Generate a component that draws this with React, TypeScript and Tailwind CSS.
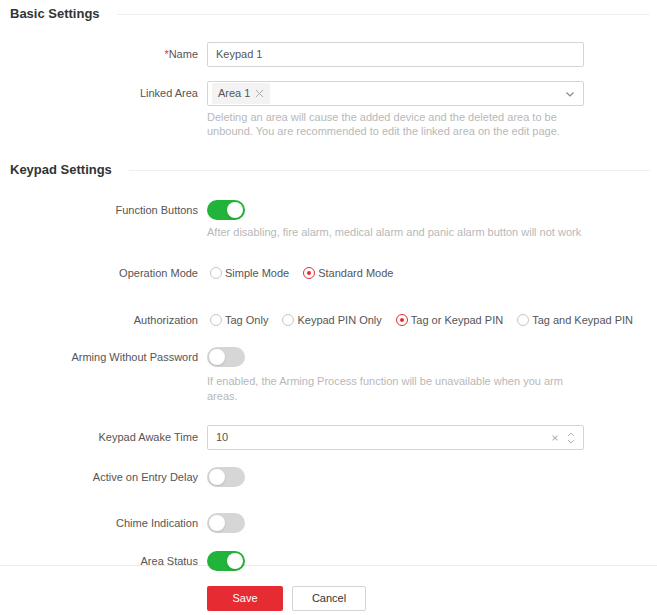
import type { ReactNode } from 'react'

function SectionTitle({ title }: { title: string }) {
  return (
    <div className="flex h-[28px] items-center gap-[17px] pl-[10px] pr-[7px]">
      <h3 className="text-[13px] font-bold text-[#333]">{title}</h3>
      <div className="h-px flex-1 bg-[#efefef]" />
    </div>
  )
}

function Row({ label, required, children, className = '' }: { label: string; required?: boolean; children: ReactNode; className?: string }) {
  return (
    <div className={`flex items-center ${className}`}>
      <label className="w-[198px] shrink-0 text-right text-[11px] text-[#555]">
        {required && <span className="text-[#e52d35]">*</span>}
        {label}
      </label>
      <div className="ml-[9px] flex flex-1 items-center">{children}</div>
    </div>
  )
}

function Toggle({ on }: { on?: boolean }) {
  return (
    <div className={`flex h-[20px] w-[38px] items-center rounded-full p-[2px] ${on ? 'justify-end bg-[#22b43a]' : 'justify-start bg-[#d6d6d6]'}`}>
      <div className="h-[16px] w-[16px] rounded-full bg-white shadow-sm" />
    </div>
  )
}

function Radio({ label, checked }: { label: string; checked?: boolean }) {
  return (
    <div className="mr-[14px] flex items-center">
      <span className={`flex h-[12px] w-[12px] items-center justify-center rounded-full border bg-white ${checked ? 'border-[#e52d35]' : 'border-[#c8c8c8]'}`}>
        {checked && <span className="h-[4px] w-[4px] rounded-full bg-[#e52d35]" />}
      </span>
      <span className="ml-[3px] text-[11px] text-[#555]">{label}</span>
    </div>
  )
}

function Help({ children, className = '' }: { children: ReactNode; className?: string }) {
  return <p className={`ml-[207px] text-[11px] leading-[14px] text-[#b8b8b8] ${className}`}>{children}</p>
}

export default function App() {
  return (
    <div className="h-[615px] w-[657px] overflow-hidden bg-white font-['Liberation_Sans',Arial,sans-serif]">
      <SectionTitle title="Basic Settings" />

      <Row label="Name" required className="mt-[14px]">
        <div className="flex h-[25px] w-[377px] items-center rounded-[2px] border border-[#d4d4d4] px-[8px] text-[11px] text-[#555]">
          Keypad 1
        </div>
      </Row>

      <Row label="Linked Area" className="mt-[14px]">
        <div className="flex h-[25px] w-[377px] items-center justify-between rounded-[2px] border border-[#d4d4d4] pl-[4px] pr-[8px]">
          <span className="flex items-center gap-[5px] rounded-[2px] bg-[#f3f3f3] px-[6px] py-[2px] text-[11px] text-[#555]">
            Area 1
            <svg width="9" height="9" viewBox="0 0 10 10" className="text-[#aaa]">
              <path d="M1 1l8 8M9 1l-8 8" stroke="currentColor" strokeWidth="1.1" />
            </svg>
          </span>
          <svg width="10" height="10" viewBox="0 0 10 10" className="text-[#888]">
            <path d="M1.5 3.5L5 7l3.5-3.5" fill="none" stroke="currentColor" strokeWidth="1.2" />
          </svg>
        </div>
      </Row>
      <Help className="mt-[4px]">
        Deleting an area will cause the added device and the deleted area to be
        <br />
        unbound. You are recommended to edit the linked area on the edit page.
      </Help>

      <div className="mt-[18px]">
        <SectionTitle title="Keypad Settings" />
      </div>

      <Row label="Function Buttons" className="mt-[16px]">
        <Toggle on />
      </Row>
      <Help className="mt-[5px]">After disabling, fire alarm, medical alarm and panic alarm button will not work</Help>

      <Row label="Operation Mode" className="mt-[24px] h-[20px]">
        <div className="flex items-center pl-[3px]">
          <Radio label="Simple Mode" />
          <Radio label="Standard Mode" checked />
        </div>
      </Row>

      <Row label="Authorization" className="mt-[27px] h-[20px]">
        <div className="flex items-center pl-[3px]">
          <Radio label="Tag Only" />
          <Radio label="Keypad PIN Only" />
          <Radio label="Tag or Keypad PIN" checked />
          <Radio label="Tag and Keypad PIN" />
        </div>
      </Row>

      <Row label="Arming Without Password" className="mt-[17px]">
        <Toggle />
      </Row>
      <Help className="mt-[7px] leading-[15px]">
        If enabled, the Arming Process function will be unavailable when you arm
        <br />
        areas.
      </Help>

      <Row label="Keypad Awake Time" className="mt-[21px]">
        <div className="flex h-[25px] w-[377px] items-center justify-between rounded-[2px] border border-[#d4d4d4] pl-[8px] pr-[8px] text-[11px] text-[#555]">
          10
          <div className="flex items-center gap-[8px] text-[#b5b5b5]">
            <svg width="8" height="8" viewBox="0 0 10 10">
              <path d="M2 2l6 6M8 2l-6 6" stroke="currentColor" strokeWidth="1.4" />
            </svg>
            <div className="flex flex-col gap-[2px]">
              <svg width="8" height="6" viewBox="0 0 8 6">
                <path d="M1 5l3-3 3 3" fill="none" stroke="currentColor" strokeWidth="1" />
              </svg>
              <svg width="8" height="6" viewBox="0 0 8 6">
                <path d="M1 1l3 3 3-3" fill="none" stroke="currentColor" strokeWidth="1" />
              </svg>
            </div>
          </div>
        </div>
      </Row>

      <Row label="Active on Entry Delay" className="mt-[17px]">
        <Toggle />
      </Row>

      <Row label="Chime Indication" className="mt-[26px]">
        <Toggle />
      </Row>

      <Row label="Area Status" className="relative z-10 mt-[18px] -mb-[6px]">
        <Toggle on />
      </Row>

      <div className="flex gap-[9px] border-t border-[#ececec] pl-[207px] pt-[20px]">
        <button className="h-[25px] w-[76px] rounded-[2px] bg-[#e62b33] text-[11px] text-white">Save</button>
        <button className="h-[25px] w-[74px] rounded-[2px] border border-[#d4d4d4] bg-white text-[11px] text-[#333]">Cancel</button>
      </div>
    </div>
  )
}
